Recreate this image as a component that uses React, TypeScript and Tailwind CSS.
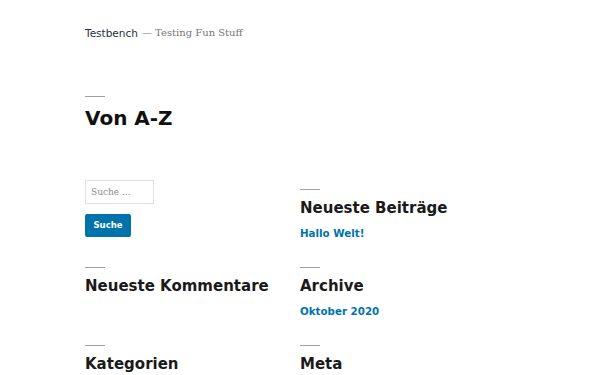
const sans = "font-['DejaVu_Sans',sans-serif]";

const Widget = ({ title, link }: { title: string; link?: string }) => (
  <div className="flex flex-col">
    <div className="h-px w-[20px] bg-[#a0a0a0]" />
    <h2 className={`${sans} mt-[8px] text-[15px] leading-[20px] font-bold text-[#1a1a1a]`}>{title}</h2>
    {link && (
      <a href="#" className={`${sans} mt-[8px] text-[10.3px] leading-[14px] font-bold text-[#0073aa]`}>
        {link}
      </a>
    )}
  </div>
);

export default function App() {
  return (
    <div className="min-h-[375px] w-[600px] bg-white pl-[85px] pt-[25px] overflow-hidden">
      <header className="flex items-center gap-[4px] leading-[16px]">
        <span className={`${sans} text-[10.5px] text-[#28303d]`}>Testbench</span>
        <span className="font-['DejaVu_Serif',serif] text-[10px] text-[#767676]">— Testing Fun Stuff</span>
      </header>

      <div className="mt-[55px] flex flex-col">
        <div className="h-px w-[20px] bg-[#a0a0a0]" />
        <h1 className={`${sans} mt-[9px] text-[20px] leading-[24px] font-bold text-[#111]`}>Von A-Z</h1>
      </div>

      <div className="mt-[50px] grid grid-cols-[215px_215px] gap-y-[27px]">
        <form className="flex flex-col items-start">
          <input
            placeholder="Suche ..."
            className="h-[24px] w-[69px] border border-[#e2e2e2] px-[5px] font-['DejaVu_Serif',serif] text-[9px] text-[#333] placeholder:text-[#8a8a8a] outline-none"
          />
          <button
            type="button"
            className={`${sans} mt-[10px] h-[23px] w-[46px] rounded-[2px] bg-[#0073aa] text-[8.5px] font-bold text-white`}
          >
            Suche
          </button>
        </form>
        <div className="pt-[9px]">
          <Widget title="Neueste Beiträge" link="Hallo Welt!" />
        </div>
        <Widget title="Neueste Kommentare" />
        <Widget title="Archive" link="Oktober 2020" />
        <Widget title="Kategorien" />
        <Widget title="Meta" />
      </div>
    </div>
  );
}
